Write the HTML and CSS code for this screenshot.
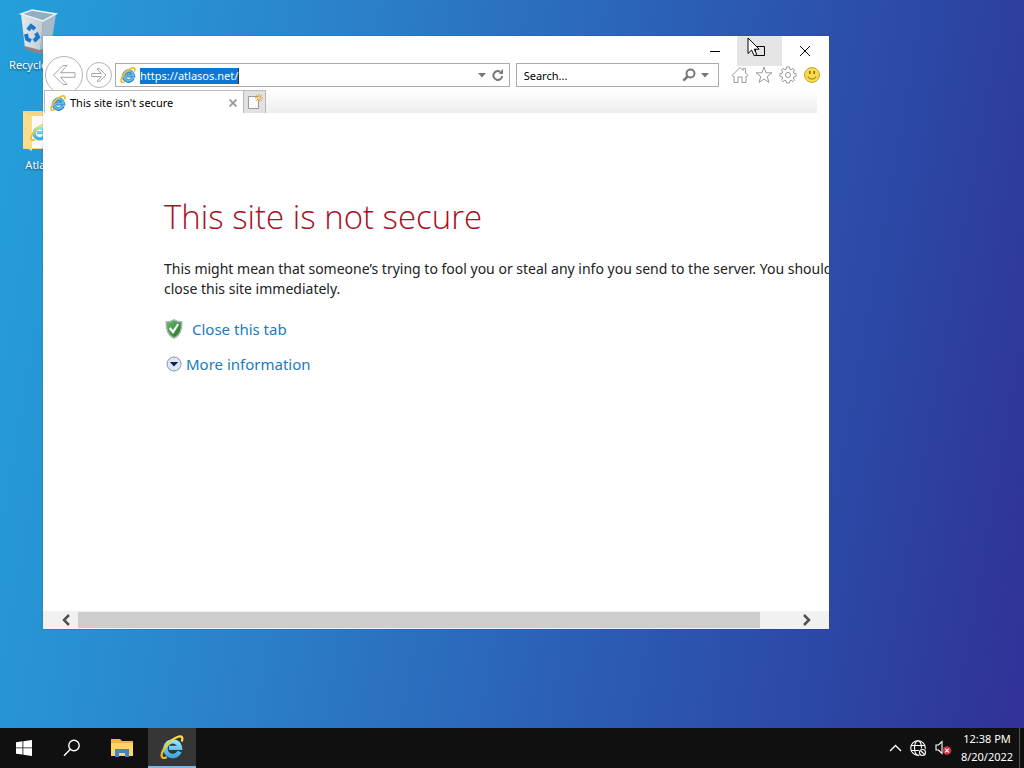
FILE: index.html
```html
<!DOCTYPE html>
<html lang="en">
<head>
<meta charset="utf-8">
<title>This site isn't secure</title>
<link rel="stylesheet" href="styles.css">
</head>
<body>
<svg class="defs" aria-hidden="true">
  <defs>
    <linearGradient id="ieBlue" x1="0" y1="0" x2="0" y2="1"><stop offset="0" stop-color="#8ee6fb"/><stop offset="1" stop-color="#3fabe2"/></linearGradient>
    <linearGradient id="ieGold" x1="0" y1="1" x2="1" y2="0"><stop offset="0" stop-color="#e9b920"/><stop offset="1" stop-color="#ffdf4a"/></linearGradient>
    <linearGradient id="shieldGreen" x1="0" y1="0" x2="1" y2="1"><stop offset="0" stop-color="#6cc06a"/><stop offset="1" stop-color="#176f24"/></linearGradient>
    <linearGradient id="binSide" x1="0" y1="0" x2="1" y2="0"><stop offset="0" stop-color="#e3e9ee"/><stop offset="1" stop-color="#c3ccd4"/></linearGradient>
    <symbol id="ie" viewBox="0 0 24 24">
      <path d="M19.500 16.500A7.300 7.300 0 1 1 20 12.900H9" fill="none" stroke="url(#ieBlue)" stroke-width="4.400"/>
      <path d="M6 22.500C1.500 24.500.6 20.800 2.600 16.200 5 10.500 12 3.600 18 1.700c4-1.200 5 .8 4 4.100" fill="none" stroke="url(#ieGold)" stroke-width="2.200" stroke-linecap="round"/>
    </symbol>
    <symbol id="ieToolbar" viewBox="0 0 24 24">
      <path d="M19.500 16.500A7.300 7.300 0 1 1 20 12.900H9" fill="none" stroke="#2f7fb8" stroke-width="5.600"/>
      <path d="M19.200 16.500A7.300 7.300 0 1 1 20 12.900H9" fill="none" stroke="#5fbdec" stroke-width="3"/>
      <path d="M6 22.500C1.500 24.500.6 20.800 2.600 16.200 5 10.500 12 3.600 18 1.700c4-1.200 5 .8 4 4.100" fill="none" stroke="#efc02c" stroke-width="2.600" stroke-linecap="round"/>
    </symbol>
  </defs>
</svg>
<div class="screen">
  <main class="desktop">
    <nav class="shortcuts" aria-label="Desktop">
      <a class="shortcut" href="#">
        <svg class="shortcut-icon" viewBox="0 0 48 48" aria-hidden="true">
          <path d="M7 6 18 2l24 4-13 8z" fill="#8fb0c4"/>
          <path d="M7 6l22 7-3 31-15-4z" fill="url(#binSide)"/>
          <path d="M29 13l13-7-5 32-11 6z" fill="#a9bac7"/>
          <path d="M7 6 18 2l24 4-13 7z" fill="none" stroke="#eaf1f5" stroke-width="1.500"/>
          <path d="M10.500 38l.5 3 15 5 12-6v-3l-12 5z" fill="#8d8580"/>
          <g fill="none" stroke="#1877cb" stroke-width="4"><path d="M14 22l3-4 4 3"/><path d="M22 25l2 4-4 4"/><path d="M17 33l-4-2-1-5"/></g>
        </svg>
        <span>Recycle Bin</span>
      </a>
      <a class="shortcut" href="#">
        <svg class="shortcut-icon" viewBox="0 0 48 48" aria-hidden="true">
          <path d="M9 3h30v38H9z" fill="#f5d583"/>
          <path d="M17 8h25v32H17z" fill="#f8fafb"/>
          <path d="M9 3l9 6v34l-9-5z" fill="#fbdc8a"/>
          <use href="#ie" x="16" y="15" width="18" height="18"/>
        </svg>
        <span>Atlas</span>
      </a>
    </nav>

    <section class="window" aria-label="Internet Explorer">
      <header class="titlebar">
        <button class="caption" aria-label="Minimize"><svg viewBox="0 0 12 12"><path d="M1 6.500h10"/></svg></button>
        <button class="caption hovered" aria-label="Maximize"><svg viewBox="0 0 12 12"><path d="M1.500 1.500h9v9h-9z"/></svg></button>
        <button class="caption" aria-label="Close"><svg viewBox="0 0 12 12"><path d="M1 1l10 10M11 1L1 11"/></svg></button>
      </header>

      <div class="toolbar">
        <button class="round back" aria-label="Back"><svg viewBox="0 0 24 24"><path d="M1.500 12 11 2.500h4L8.500 9.700H23v4.600H8.500l6.500 7.200h-4z"/></svg></button>
        <button class="round forward" aria-label="Forward"><svg viewBox="0 0 24 24"><path d="M22.500 12 13 2.500H9l6.500 7.200H1v4.600h14.500L9 21.500h4z"/></svg></button>
        <form class="box address">
          <svg class="ie-small" aria-hidden="true"><use href="#ieToolbar"/></svg>
          <div class="field"><span class="selected">https://atlasos.net/</span></div>
          <button type="button" class="tool" aria-label="Show address list"><svg class="caret" viewBox="0 0 8 5"><path d="M0 0h8L4 4.500z"/></svg></button>
          <button type="button" class="tool" aria-label="Refresh"><svg class="refresh" viewBox="0 0 12 14"><path d="M10.200 8a4.400 4.400 0 1 1-2-4.200" fill="none" stroke="#777" stroke-width="2"/><path d="M6.500 5.800 11 6V.8z" fill="#777"/></svg></button>
        </form>
        <form class="box search">
          <input type="text" placeholder="Search..." aria-label="Search">
          <button type="button" class="tool" aria-label="Search the web"><svg class="lens" viewBox="0 0 14 14"><circle cx="8.500" cy="5.500" r="4" fill="none" stroke="#777" stroke-width="2"/><path d="M5.500 8.500 1.300 12.700" stroke="#777" stroke-width="2.500"/></svg></button>
          <button type="button" class="tool" aria-label="Search providers"><svg class="caret" viewBox="0 0 8 5"><path d="M0 0h8L4 4.500z"/></svg></button>
        </form>
        <div class="commands">
          <button aria-label="Home"><svg viewBox="0 0 18 18"><path d="M1 9.500 9 1.500l3 3V2.500h2.500v4.500L17 9.500l-1.500 1L15 10v6.500h-4V11H7v5.500H3V10l-.7.500z"/></svg></button>
          <button aria-label="Favorites"><svg viewBox="0 0 18 18"><path d="M9 1l2 5.800h6l-4.800 3.700 1.800 6L9 13l-5 3.500 1.800-6L1 6.800h6z"/></svg></button>
          <button aria-label="Tools"><svg viewBox="0 0 18 18"><path d="M7.500 1h3l.4 2.200 1.200.5L14 2.400 15.600 4l-1.300 1.900.5 1.200 2.200.4v3l-2.200.4-.5 1.200 1.300 1.900-1.600 1.600-1.900-1.300-1.200.5-.4 2.200h-3l-.4-2.200-1.200-.5L4 15.600 2.400 14l1.300-1.900-.5-1.200L1 10.500v-3l2.200-.4.5-1.200L2.400 4 4 2.400l1.900 1.300 1.200-.5z"/><circle cx="9" cy="9" r="2.600"/></svg></button>
          <button aria-label="Send feedback"><svg viewBox="0 0 18 18"><circle cx="9" cy="9" r="7.500" fill="#f9da4b" stroke="#c9a43a"/><path d="M6.800 5v3M11.200 5v3" stroke="#7a6420" stroke-width="1.500"/><path d="M4.800 10.500c1.800 3.400 6.600 3.400 8.400 0" stroke="#a98a28" stroke-width="1.200"/></svg></button>
        </div>
      </div>

      <div class="tabs">
        <div class="tab">
          <svg class="ie-small" aria-hidden="true"><use href="#ieToolbar"/></svg>
          <span class="tab-title">This site isn't secure</span>
          <button aria-label="Close tab"><svg viewBox="0 0 8 8"><path d="M.5.5l7 7M7.500.5l-7 7" stroke="#999" stroke-width="1.800"/></svg></button>
        </div>
        <button class="new-tab" aria-label="New tab"><svg viewBox="0 0 16 16"><path d="M1.500 2.500h10v12h-10z" fill="#fafafa" stroke="#999"/><path d="M12 0v8M8 4h8M9.200 1.200l5.600 5.600M14.800 1.200 9.200 6.800" stroke="#dca13c"/><circle cx="12" cy="4" r="1.500" fill="#f6d68c"/></svg></button>
      </div>

      <article class="page">
        <h1>This site is not secure</h1>
        <p>This might mean that someone’s trying to fool you or steal any info you send to the server. You should close this site immediately.</p>
        <a class="action close-link" href="#">
          <svg viewBox="0 0 18 20" aria-hidden="true"><path d="M9 .8C6.500 2.500 4 3 1.200 3c0 8 1.500 13 7.800 16.200C15.300 16 16.800 11 16.800 3 14 3 11.500 2.500 9 .8z" fill="url(#shieldGreen)" stroke="#a9b3a9" stroke-width="1.400"/><path d="M4.800 9l3.200 4 5.200-8" fill="none" stroke="#fff" stroke-width="2.200"/></svg>
          <span>Close this tab</span>
        </a>
        <a class="action more-link" href="#">
          <svg viewBox="0 0 16 16" aria-hidden="true"><circle cx="8" cy="8" r="7" fill="#dce8f4" stroke="#8494a8"/><path d="M3.800 6h8.400L8 10.500z" fill="#10214f"/></svg>
          <span>More information</span>
        </a>
      </article>

      <div class="scrollbar">
        <button aria-label="Scroll left"><svg viewBox="0 0 10 12"><path d="M8 1 3 6l5 5"/></svg></button>
        <div class="track"><div class="thumb"></div></div>
        <button aria-label="Scroll right"><svg viewBox="0 0 10 12"><path d="M2 1l5 5-5 5"/></svg></button>
      </div>

      <svg class="pointer" viewBox="0 0 14 20" aria-hidden="true"><path d="M1 1v15.500l3.600-3.400 2.600 5.700 2.600-1.200-2.600-5.400h5z" fill="#fff" stroke="#000"/></svg>
    </section>
  </main>

  <footer class="taskbar">
    <button class="task" aria-label="Start"><svg width="16" height="16" viewBox="0 0 16 16" fill="#fff"><path d="M0 2.200 6.500 1.300v6.200H0zM7.300 1.200 16 0v7.500H7.300zM0 8.300h6.500v6.300L0 13.700zM7.300 8.300H16V16l-8.700-1.200z"/></svg></button>
    <button class="task" aria-label="Search"><svg width="18" height="18" viewBox="0 0 18 18" fill="none" stroke="#fff" stroke-width="1.400"><circle cx="11" cy="6.500" r="5.200"/><path d="M7.300 10.300 1 16.700"/></svg></button>
    <button class="task folder" aria-label="File Explorer"><svg width="22" height="18" viewBox="0 0 22 18"><path d="M0 0h9l2 2h11v15H0z" fill="#efb73e"/><path d="M0 4h22v13H0z" fill="#ffd567"/><path d="M4 18v-8h14v8h-4v-4H8v4z" fill="#3f86c6"/></svg></button>
    <button class="task active" aria-label="Internet Explorer"><svg width="24" height="24"><use href="#ie"/></svg></button>
    <div class="tray">
      <button aria-label="Show hidden icons"><svg width="13" height="8" viewBox="0 0 13 8" fill="none" stroke="#fff" stroke-width="1.400"><path d="M1 7l5.500-5.500L12 7"/></svg></button>
      <button aria-label="Network"><svg width="17" height="17" viewBox="0 0 17 17" fill="none" stroke="#fff" stroke-width="1.100"><circle cx="8" cy="8" r="7.300"/><ellipse cx="8" cy="8" rx="3.500" ry="7.300"/><path d="M1 5.500h14M1 10.500h14"/><circle cx="12.500" cy="12.500" r="4.300" fill="#101010" stroke="none"/><circle cx="12.500" cy="12.500" r="3"/><path d="M10.500 10.500l4 4"/></svg></button>
      <button aria-label="Volume"><svg width="17" height="16" viewBox="0 0 17 16"><path d="M1 5h2.500L7 1.500v12L3.500 10H1z" fill="none" stroke="#fff" stroke-width="1.100"/><circle cx="12" cy="10.500" r="4.300" fill="#d32f45"/><path d="M10.200 8.700l3.600 3.600M13.800 8.700l-3.600 3.600" stroke="#fff" stroke-width="1.200"/></svg></button>
      <time class="clock"><span>12:38 PM</span><span>8/20/2022</span></time>
    </div>
    <button class="peek" aria-label="Show desktop"></button>
  </footer>
</div>
</body>
</html>
```
FILE: styles.css
```css
* { box-sizing: border-box; }
body { margin: 0; font: 11px/18px "Noto Sans", "Open Sans", sans-serif; color: #000; }
button { margin: 0; padding: 0; border: 0; background: none; font: inherit; color: inherit; }
svg { display: block; flex: none; }
form { margin: 0; }
a { text-decoration: none; }
.defs { position: absolute; width: 0; height: 0; }

.screen { display: flex; flex-direction: column; height: 100vh; overflow: hidden; }
.desktop {
  position: relative; flex: 1; min-height: 0; overflow: hidden;
  background: linear-gradient(100deg, #24a0db 0%, #2b84cb 28%, #2b5cb4 62%, #2c47a5 82%, #2e3a9b 93%, #323199 100%);
}
.shortcuts { display: flex; flex-direction: column; gap: 34px; width: 76px; padding-top: 8px; }
.shortcut { display: flex; flex-direction: column; align-items: center; color: #fff; white-space: nowrap; text-shadow: 0 1px 2px #0008; }
.shortcut-icon { width: 48px; height: 48px; }

.window {
  position: absolute; left: 43px; top: 36px; right: 195px; bottom: 99px;
  display: flex; flex-direction: column; background: #fff;
  box-shadow: 0 0 1px #2228;
}
.titlebar { display: flex; justify-content: flex-end; height: 27px; padding-right: 2px; flex: none; }
.caption { width: 45px; height: 30px; display: grid; place-items: center; }
.caption svg { width: 12px; height: 12px; fill: none; stroke: #000; }
.hovered { background: #e5e5e5; }

.toolbar { display: flex; align-items: center; height: 24px; padding: 0 8px 0 2px; flex: none; }
.round { border: 1px solid #b4b4b4; border-radius: 50%; background: #fff; display: grid; place-items: center; flex: none; }
.round svg { fill: #fff; stroke: #a5a5a5; }
.back { width: 38px; height: 38px; margin-right: 3px; }
.back svg { width: 24px; height: 24px; }
.forward { width: 26px; height: 26px; margin-right: 3px; }
.forward svg { width: 16px; height: 16px; stroke-width: 1.5; }
.box { display: flex; align-items: center; height: 24px; border: 1px solid #ababab; background: #fff; min-width: 0; }
.address { flex: 2 0 0; margin-right: 6px; padding-left: 4px; }
.search { flex: 1 0 0; margin-right: 12px; padding-left: 7px; }
.ie-small { width: 16px; height: 16px; }
.field { flex: 1; min-width: 0; padding: 1px 0 0 4px; line-height: 16px; }
.selected { display: inline-block; background: #0c78d4; color: #fff; border-right: 1px solid #333; }
.search input { flex: 1; min-width: 0; padding: 1px 0 0; border: 0; outline: 0; font: inherit; }
.search input::placeholder { color: #000; opacity: 1; }
.tool { width: 16px; height: 22px; display: grid; place-items: center; flex: none; }
.address .tool:last-child { margin-right: 3px; }
.search .tool:last-child { margin-right: 5px; }
.caret { width: 8px; height: 5px; fill: #777; }
.refresh { width: 12px; height: 14px; }
.lens { width: 14px; height: 14px; }
.commands { display: flex; gap: 6px; flex: none; }
.commands svg { width: 18px; height: 18px; fill: none; stroke: #9b9b9b; }

.tabs { position: relative; display: flex; height: 23px; margin: 3px 12px 0 1px; flex: none; background: linear-gradient(#fff, #ededed); }
.tab { display: flex; align-items: center; gap: 4px; width: 199px; padding: 1px 6px 0 5px; background: #fff; border: solid #bcbcbc; border-width: 1px 0 0 1px; }
.tab-title { flex: 1; }
.tab button svg { width: 8px; height: 8px; }
.new-tab { width: 23px; background: #e1e1e1; border: 1px solid #b9b9b9; border-bottom: 0; display: grid; place-items: center; }
.new-tab svg { width: 16px; height: 16px; }

.page { flex: 1; min-height: 0; overflow: hidden; padding: 80px 0 0 121px; color: #222; }
.page h1 { margin: 0; font: 300 33px/48px "Open Sans", "Noto Sans", sans-serif; color: #a80f22; white-space: nowrap; }
.page p { width: 690px; margin: 18px 0 0; font-size: 14px; line-height: 20px; }
.action { display: flex; align-items: center; width: max-content; font-size: 15px; line-height: 24px; color: #1b7ac0; }
.close-link { gap: 9px; margin: 18px 0 0 1px; }
.close-link svg { width: 18px; height: 20px; }
.more-link { gap: 4px; margin: 11px 0 0 2px; }
.more-link svg { width: 16px; height: 16px; }

.scrollbar { display: flex; height: 18px; padding: 1px 14px; background: #f1f1f1; flex: none; }
.scrollbar button { width: 17px; display: grid; place-items: center; }
.scrollbar svg { width: 10px; height: 12px; fill: none; stroke: #505050; stroke-width: 2.5; }
.track { flex: 1; padding: 0 5% 0 4px; }
.thumb { height: 100%; background: #cdcdcd; }
.pointer { position: absolute; right: 68px; top: 1px; width: 14px; height: 20px; }

.taskbar { display: flex; height: 40px; flex: none; background: #101010; color: #fff; }
.task { width: 48px; display: grid; place-items: center; }
.folder { width: 52px; }
.active { background: #363636; border-bottom: 2px solid #76b9ed; }
.tray { display: flex; align-items: center; gap: 8px; margin-left: auto; }
.clock { display: flex; flex-direction: column; align-items: center; width: 54px; }
.peek { width: 5px; margin-left: 5px; border-left: 1px solid #555; }
```
